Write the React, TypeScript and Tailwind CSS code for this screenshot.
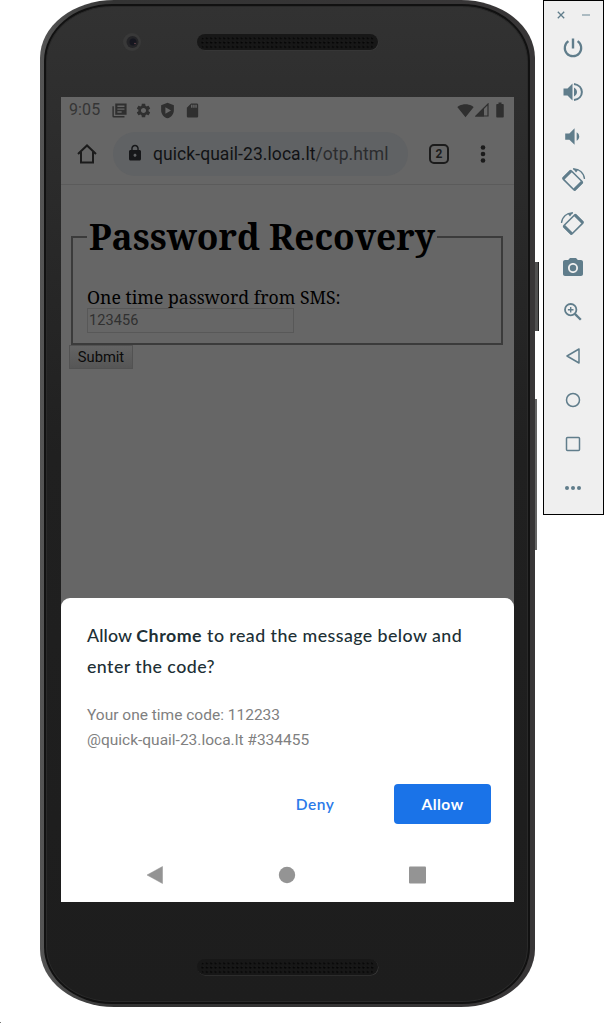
import type { ReactNode } from "react";
import {
  MdBatteryFull,
  MdCameraAlt,
  MdLock,
  MdSdCard,
  MdSettings,
  MdSignalWifi4Bar,
  MdVolumeDown,
} from "react-icons/md";

function Speaker({ id }: { id: string }) {
  return (
    <svg width="182" height="17" viewBox="0 0 182 17" className="block">
      <defs>
        <pattern id={id} x="3.5" y="2" width="4.35" height="4.35" patternUnits="userSpaceOnUse">
          <circle cx="2" cy="2.1" r="1.1" fill="#050505" />
          <circle cx="2.6" cy="1.4" r="0.4" fill="#3a3a3a" />
        </pattern>
      </defs>
      <rect x="0.5" y="0.5" width="181" height="16" rx="8" fill="#3c3c3c" />
      <rect x="0" y="0" width="181" height="16" rx="8" fill="#171717" />
      <rect x="3.5" y="2" width="174" height="13" rx="6" fill={`url(#${id})`} />
    </svg>
  );
}

function StatusBar() {
  return (
    <div className="flex h-[26px] items-center pr-[5px] pl-2 text-[#2f2f2f]">
      <span className="w-[42px] text-[16px] leading-5 tracking-[0.1px] text-[#353535]">9:05</span>
      <svg width="17" height="17" viewBox="0 0 24 24" fill="currentColor" className="mr-[7px]">
        <path d="M2 6v14a2 2 0 0 0 2 2h15v-2.200H4V6zM6 2h16v16H6zM9 5v2.200h10V5zM9 9v2h10V9zM9 13v2h6v-2z" fillRule="evenodd" />
      </svg>
      <MdSettings size={17} className="mr-[7px]" />
      <svg width="17" height="17" viewBox="0 0 24 24" fill="currentColor" className="mr-[8px]">
        <path d="M12 1L3 4.500v7C3 17 7 21.500 12 23c5-1.500 9-6 9-11.500v-7zM9 7.500l8 4.500-8 4.500z" fillRule="evenodd" />
      </svg>
      <MdSdCard size={17} />
      <div className="ml-auto flex items-center">
        <MdSignalWifi4Bar size={17} className="mr-px" />
        <svg width="14" height="14" viewBox="0 0 14 14" className="mr-[2px]">
          <path d="M13 1V13H1Z" fill="none" stroke="currentColor" strokeWidth="1.200" />
          <path d="M9 4.500V13.500H0Z" fill="currentColor" />
        </svg>
        <MdBatteryFull size={18} />
      </div>
    </div>
  );
}

function Toolbar() {
  return (
    <div className="flex h-[62px] items-center border-b border-[#5b5b5b]">
      <svg width="20" height="20" viewBox="0 0 20 20" className="ml-4" fill="none" stroke="#1b1b1b" strokeWidth="2">
        <path d="M1 10L10 1.500 19 10M4 8V18.500H16V8" />
      </svg>
      <div className="ml-4 flex h-[44px] w-[295px] items-center rounded-full bg-[#606264] pl-[13px]">
        <MdLock size={18} color="#161719" className="-mt-px" />
        <span className="mt-[2px] ml-[9px] text-[17.500px] tracking-[0.070px] whitespace-nowrap text-[#111214]">
          quick-quail-23.loca.lt<span className="text-[#2b2c2e]">/otp.html</span>
        </span>
      </div>
      <div className="ml-[21px] flex size-5 items-center justify-center rounded-[5px] border-2 border-[#1b1b1b] text-[12px] font-bold text-[#1b1b1b]">
        2
      </div>
      <svg width="6" height="20" viewBox="0 0 6 20" className="ml-[31px]" fill="#1b1b1b">
        <circle cx="3" cy="3.500" r="2.300" />
        <circle cx="3" cy="10" r="2.300" />
        <circle cx="3" cy="16.500" r="2.300" />
      </svg>
    </div>
  );
}

function RecoveryPage() {
  return (
    <div className="pt-[30px] pr-[11px] pl-[10px]">
      <fieldset className="h-[130px] border-2 border-[#3b3b3b] pl-[14px]">
        <legend className="h-[44px] px-[2px] font-['Noto_Serif','DejaVu_Serif_Condensed','DejaVu_Serif',serif] text-[35.300px] leading-[42px] font-bold whitespace-nowrap text-black">
          Password Recovery
        </legend>
        <label className="mt-[27px] block font-['Noto_Serif','DejaVu_Serif_Condensed','DejaVu_Serif',serif] text-[17.640px] leading-[22px] whitespace-nowrap text-black">
          One time password from SMS:
        </label>
        <div className="flex h-[25px] w-[207px] items-center border border-[#585858] pl-[1px] text-[14.500px] tracking-[0.100px] text-[#303030]">
          123456
        </div>
      </fieldset>
      <button className="-ml-[2px] block h-[24px] w-[64px] border border-[#525252] bg-linear-to-b from-[#646464] to-[#565656] text-[14.700px] leading-[23px] text-[#0b0b0b]">
        Submit
      </button>
    </div>
  );
}

function PermissionSheet() {
  return (
    <div className="mt-auto h-[304px] rounded-t-[9px] bg-white px-[26px] pt-[22px]">
      <p className="font-['Google_Sans','Lato',sans-serif] text-[17.800px] leading-[31px] font-medium tracking-[0.440px] whitespace-nowrap text-[#202f35]">
        <span className="tracking-[0.100px]">Allow </span>
        <b className="tracking-[0.500px]">Chrome</b> to read the message below and
        <br />
        enter the code?
      </p>
      <p className="mt-[21px] text-[15.500px] leading-[24.500px] whitespace-nowrap text-[#808080]">
        Your one time code: 112233
        <br />
        @quick-quail-23.loca.lt #334455
      </p>
      <div className="-mr-[3px] mt-[32px] flex h-[40px] justify-end font-['Google_Sans','Lato',sans-serif] text-[15.500px]">
        <button className="mr-[45px] w-[68px] pt-px text-center font-semibold tracking-[0.500px] text-[#2b7ae9]">Deny</button>
        <button className="w-[97px] rounded-[4px] bg-[#1a73e8] pt-px font-bold tracking-[0.500px] text-white">Allow</button>
      </div>
      <svg width="280" height="18" viewBox="0 0 280 18" className="mt-[42px] ml-[60px]" fill="#949494">
        <path d="M0 9L15.500 0.500V17.500Z" stroke="#949494" strokeWidth="0.500" strokeLinejoin="round" />
        <circle cx="140" cy="9" r="8.200" />
        <rect x="262" y="0.500" width="17" height="17" rx="1" />
      </svg>
    </div>
  );
}

function RotateIcon({ flip = false }: { flip?: boolean }) {
  return (
    <svg width="26" height="26" viewBox="-13 -13 26 26" className={flip ? "-scale-x-100" : ""} fill="none" stroke="currentColor">
      <g transform="rotate(45)">
        <rect x="-8.500" y="-5.300" width="17" height="11.600" rx="1" strokeWidth="1.600" />
        <path d="M-7.700 -5V6M7.700 -5V6" strokeWidth="2.800" />
      </g>
      <path d="M0 -11C6 -11.500 11 -7 11.500 -1" strokeWidth="1.300" />
      <path d="M0 -11.600L5.500 -10.500 3 -7.500Z" fill="currentColor" stroke="none" />
    </svg>
  );
}

function ToolRow({ children }: { children: ReactNode }) {
  return <div className="flex h-[44px] w-full items-center justify-center">{children}</div>;
}

function EmulatorTools() {
  return (
    <aside className="flex h-[515px] w-[61px] flex-col border border-black bg-[#efefef] pr-[2px] text-[#607d8b]">
      <div className="flex h-[25px] items-center justify-center gap-[17px] pt-[3px] pl-[2px]">
        <svg width="8" height="8" viewBox="0 0 8 8" stroke="currentColor" strokeWidth="1.300">
          <path d="M0.800 0.800L7.200 7.200M7.200 0.800L0.800 7.200" />
        </svg>
        <svg width="8" height="8" viewBox="0 0 8 8">
          <path d="M0 4H8" stroke="#a4b5bd" strokeWidth="1.800" />
        </svg>
      </div>
      <ToolRow>
        <svg width="20" height="20" viewBox="0 0 20 20" fill="none" stroke="currentColor" strokeWidth="2.200">
          <path d="M5.400 3.200A8.200 8.200 0 1 0 14.600 3.200" />
          <path d="M10 0.500V10.500" strokeWidth="2.400" />
        </svg>
      </ToolRow>
      <ToolRow>
        <svg width="20" height="20" viewBox="0 0 20 20" fill="currentColor">
          <path d="M0.500 6.500H4.500L9.500 1.500V18.500L4.500 13.500H0.500ZM11 5.500C15 7.500 15 12.500 11 14.500Z" />
          <path d="M11 1.900C21.500 3.500 21.500 16.500 11 18.100" fill="none" stroke="currentColor" strokeWidth="2" />
        </svg>
      </ToolRow>
      <ToolRow><MdVolumeDown size={25} /></ToolRow>
      <ToolRow><RotateIcon /></ToolRow>
      <ToolRow><RotateIcon flip /></ToolRow>
      <ToolRow><MdCameraAlt size={24} /></ToolRow>
      <ToolRow>
        <svg width="18" height="18" viewBox="0 0 18 18" fill="none" stroke="currentColor">
          <circle cx="6.700" cy="6.700" r="5.700" strokeWidth="1.800" />
          <path d="M10.900 10.900L16.800 16.800" strokeWidth="2.300" />
          <path d="M3.900 6.700H9.500M6.700 3.900V9.500" strokeWidth="1.400" />
        </svg>
      </ToolRow>
      <ToolRow>
        <svg width="16" height="16" viewBox="0 0 16 16" fill="none" stroke="currentColor" strokeWidth="1.500" strokeLinejoin="round">
          <path d="M2 8L14 1V15Z" />
        </svg>
      </ToolRow>
      <ToolRow>
        <svg width="16" height="16" viewBox="0 0 16 16" fill="none" stroke="currentColor" strokeWidth="1.500">
          <circle cx="8" cy="8" r="6.500" />
        </svg>
      </ToolRow>
      <ToolRow>
        <svg width="16" height="16" viewBox="0 0 16 16" fill="none" stroke="currentColor" strokeWidth="1.500">
          <rect x="1.500" y="1.500" width="13" height="13" rx="1" />
        </svg>
      </ToolRow>
      <ToolRow>
        <svg width="16" height="4" viewBox="0 0 16 4" fill="currentColor">
          <circle cx="2" cy="2" r="2" />
          <circle cx="8" cy="2" r="2" />
          <circle cx="14" cy="2" r="2" />
        </svg>
      </ToolRow>
    </aside>
  );
}

export default function App() {
  return (
    <div className="relative flex h-[1024px] w-[604px] items-start overflow-hidden bg-white pl-[40px] font-['Roboto',sans-serif]">
      <div className="h-[1007px] w-[495px] rounded-[74px_/_58px] bg-linear-to-r from-[#555555] via-[#333333] via-[15%] to-[#383637] pt-[4px] pr-[5px] pb-[3px] pl-[4px]">
        <div className="h-full rounded-[68px_/_57px] bg-[#111111] p-[2px]">
          <div className="flex h-full flex-col rounded-[66px_/_55px] border border-[#2a2a2a] bg-linear-to-b from-[#323232] via-[#202020] via-[45%] to-[#1d1d1d] pl-[14px]">
            <div className="flex h-[90px] items-start pt-[27px]">
              <svg width="18" height="18" viewBox="0 0 18 18" className="-mt-[1px] ml-[62px]">
                <circle cx="9" cy="9" r="9" fill="#393939" />
                <circle cx="9.500" cy="9" r="6" fill="#242427" />
                <circle cx="10" cy="9" r="3.500" fill="#15161f" />
                <circle cx="12" cy="10.500" r="0.800" fill="#6b4850" />
              </svg>
              <div className="ml-[56px]"><Speaker id="earpiece" /></div>
            </div>
            <div className="flex h-[805px] w-[453px] shrink-0 flex-col bg-[#666666]">
              <StatusBar />
              <Toolbar />
              <RecoveryPage />
              <PermissionSheet />
            </div>
            <div className="mt-[57px] ml-[136px]"><Speaker id="loudspeaker" /></div>
          </div>
        </div>
      </div>
      <div className="flex w-[8px] flex-col items-start">
        <div className="mt-[262px] h-[69px] w-[4px] border-r border-[#202020] bg-[#505050]" />
        <div className="mt-[68px] h-[151px] w-[2px] bg-[#666666]" />
      </div>
      <EmulatorTools />
      <span className="absolute bottom-[1px] left-0 size-px bg-[#777777]" />
    </div>
  );
}
